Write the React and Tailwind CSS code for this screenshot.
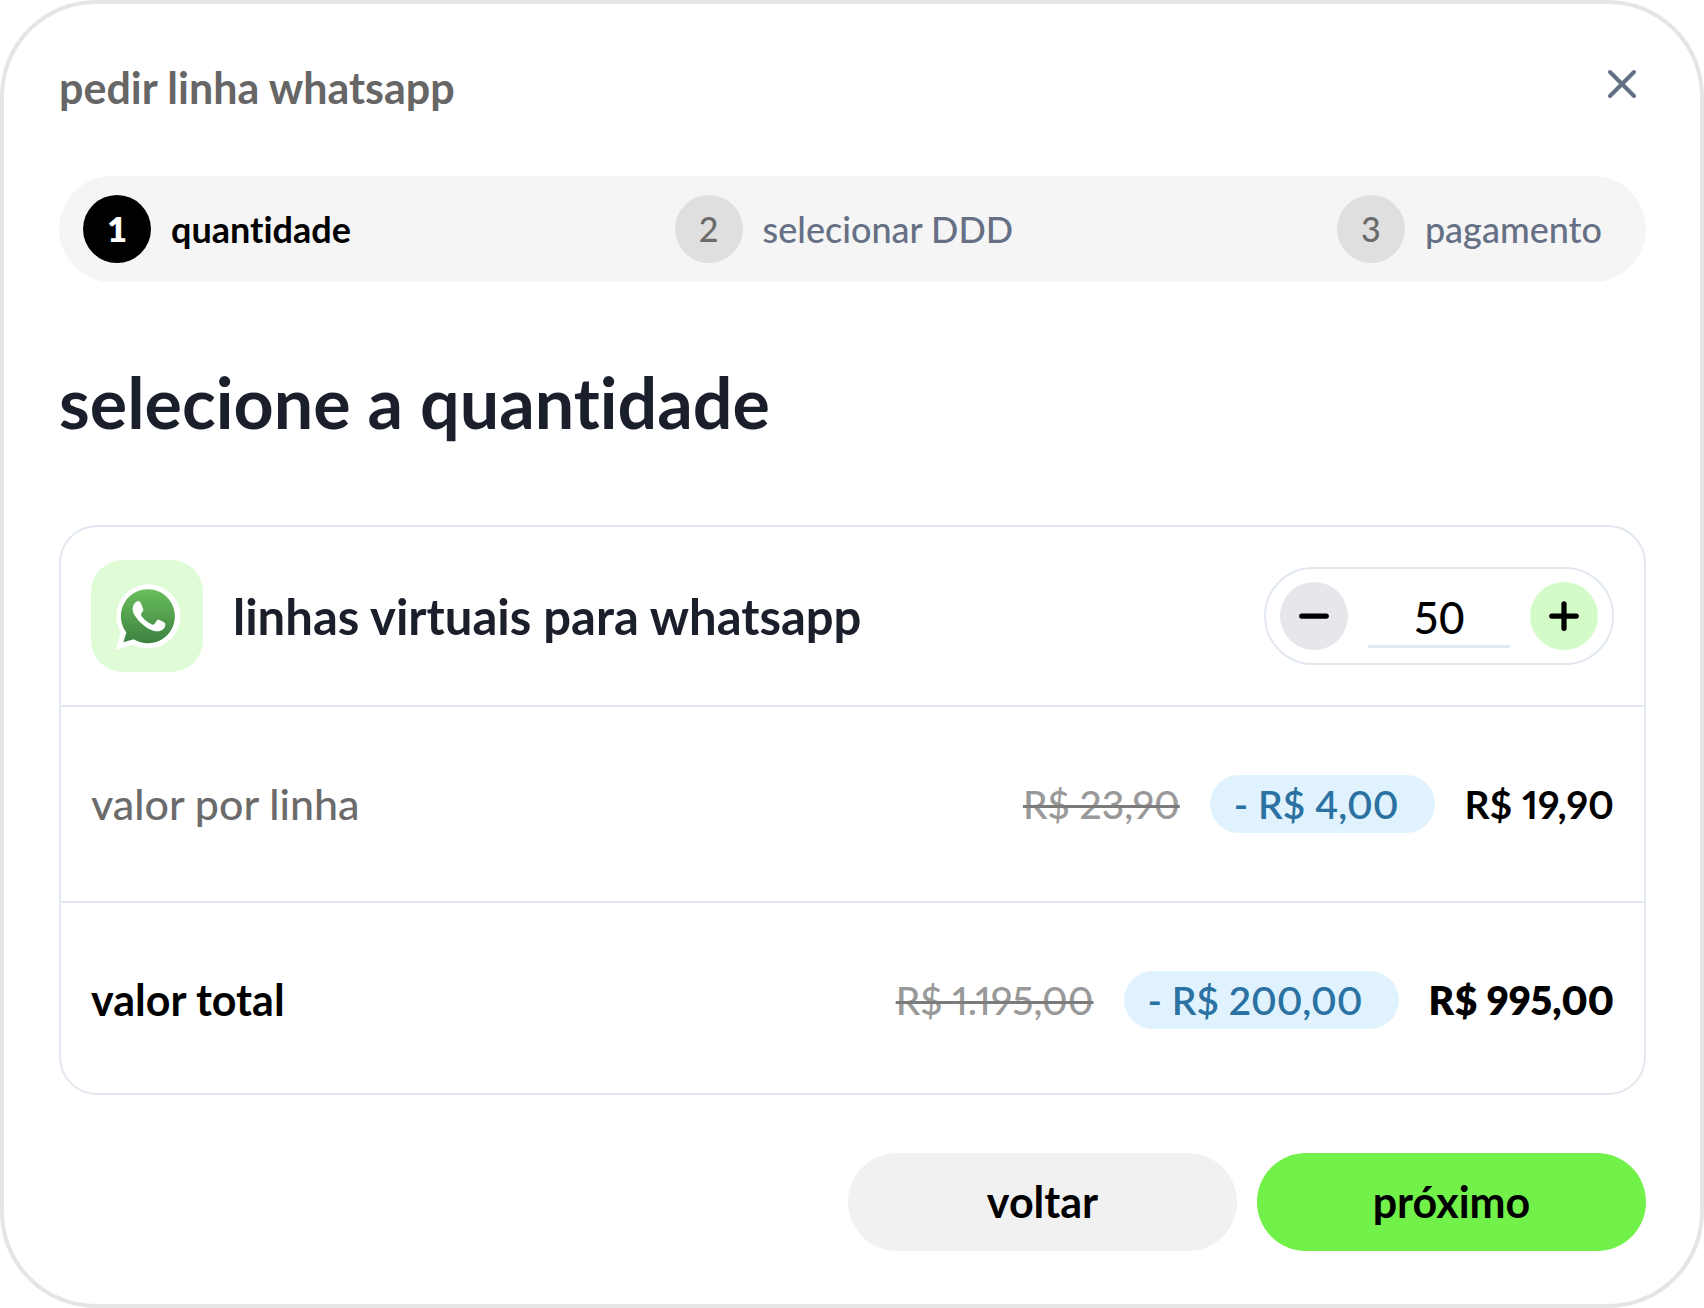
import { useState } from 'react';
import clsx from 'clsx';
import { Minus, Plus, X } from 'lucide-react';

const STEPS = [
	{ id: 1, label: 'quantidade' },
	{ id: 2, label: 'selecionar DDD' },
	{ id: 3, label: 'pagamento' },
];

const LIST_PRICE = 23.9;
const UNIT_DISCOUNT = 4;

const money = ( value ) => {
	const [ whole, cents ] = value.toFixed( 2 ).split( '.' );
	return `R$ ${ whole.replace( /\B(?=(\d{3})+$)/g, '.' ) },${ cents }`;
};

const WhatsAppIcon = () => (
	<svg viewBox="0 0 112 112" className="size-28" aria-hidden="true">
		<defs>
			<linearGradient id="bubble" x1="0" y1="0" x2="0" y2="1">
				<stop offset="0" stopColor="#6abf5b" />
				<stop offset="1" stopColor="#3c8142" />
			</linearGradient>
		</defs>
		<path
			fill="#fff"
			d="M24.7 90.2 29.6 72.2A32 32 0 1 1 42 84.4Z"
		/>
		<path
			fill="url(#bubble)"
			d="M32.4 82.2 35.4 72.6A27 27 0 1 1 42.7 79.2Z"
		/>
		<path
			fill="#fff"
			d="M44.3 42.6C45.6 41.4 47.6 40.8 48.8 41.6C49.6 42.2 51.6 47.2 52.3 49.4C52.7 50.8 50.2 53 49.9 54.4C49.9 55.8 53 59 55.4 61C58 63 61 64.9 62.4 64.7C63.7 64.4 65.4 60.6 66.8 59.8C67.9 59.4 72.6 61.8 73.9 62.9C74.8 64 74.2 67.2 72.6 68.8C70.6 70.8 67.6 71.6 64.8 71.3C60 70.7 54.6 67.4 50.8 63.8C46.6 59.8 42.7 54.8 41.8 51C41.2 48 42.2 44.4 44.3 42.6Z"
		/>
	</svg>
);

const Step = ( { step, active } ) => (
	<li
		className="flex items-center gap-5"
		aria-current={ active ? 'step' : undefined }
	>
		<span
			className={ clsx(
				'flex size-[68px] items-center justify-center rounded-full text-[34px] leading-10',
				active
					? 'bg-black font-extrabold text-white'
					: 'bg-[#dfdfdf] font-medium text-[#6b6b6b]'
			) }
		>
			{ step.id }
		</span>
		<span
			className={ clsx(
				'text-[36px] leading-10',
				active ? 'font-bold text-black' : 'font-medium text-[#667085]'
			) }
		>
			{ step.label }
		</span>
	</li>
);

const PriceRow = ( { label, original, discount, final, total } ) => (
	<div
		className={ clsx(
			'flex items-center justify-between px-[30px] pt-[68px]',
			total ? 'pb-16' : 'border-b-2 border-[#e2e8f0] pb-[68px]'
		) }
	>
		<dt
			className={ clsx(
				'text-[43px] leading-[58px]',
				total ? 'font-bold text-black' : 'font-medium text-[#6b6b6b]'
			) }
		>
			{ label }
		</dt>
		<dd className="flex items-center gap-[30px] text-[39px] leading-[58px] proportional-nums">
			<s className="font-medium text-[#999] decoration-[#7b7b7b] decoration-3">
				{ money( original ) }
			</s>
			<span className="rounded-full bg-[#e0f2fe] pr-9 pl-6 font-semibold text-[#2b72a2]">
				- { money( discount ) }
			</span>
			<span className={ total ? 'font-extrabold' : 'font-bold' }>
				{ money( final ) }
			</span>
		</dd>
	</div>
);

const App = () => {
	const [ quantity, setQuantity ] = useState( 50 );

	return (
		<div className="bg-white font-['Lato',sans-serif] text-black [font-variant-ligatures:none]">
			<main className="flex min-h-screen flex-col rounded-[96px] border-4 border-[#e5e5e5] pt-14 pr-[54px] pb-[53px] pl-[55px]">
				<header className="flex items-start justify-between">
					<h1 className="text-[43px] leading-[56px] font-bold text-[#666]">
						pedir linha whatsapp
					</h1>
					<button type="button" aria-label="fechar">
						<X
							className="size-12 text-[#667085]"
							strokeWidth={ 2 }
						/>
					</button>
				</header>

				<ol className="mt-[60px] flex items-center justify-between rounded-full bg-[#f5f5f5] py-[19px] pr-11 pl-6">
					{ STEPS.map( ( step ) => (
						<Step
							key={ step.id }
							step={ step }
							active={ step.id === 1 }
						/>
					) ) }
				</ol>

				<h2 className="mt-[84px] text-[70px] leading-[72px] font-bold text-[#1a1f2b]">
					selecione a quantidade
				</h2>

				<section className="mt-[87px] rounded-[38px] border-2 border-[#e2e8f0]">
					<div className="flex items-center justify-between border-b-2 border-[#e2e8f0] px-[30px] py-[33px]">
						<div className="flex items-center gap-[30px]">
							<span className="rounded-[32px] bg-[#dffcd6]">
								<WhatsAppIcon />
							</span>
							<label
								htmlFor="quantity"
								className="text-[49px] leading-[60px] font-bold text-[#1a1f2b]"
							>
								linhas virtuais para whatsapp
							</label>
						</div>
						<div className="flex items-center gap-5 rounded-full border-2 border-[#e2e8f0] px-[14px] py-[13px]">
							<button
								type="button"
								aria-label="diminuir"
								className="flex size-[68px] items-center justify-center rounded-full bg-[#e5e7eb]"
								onClick={ () =>
									setQuantity( Math.max( 1, quantity - 1 ) )
								}
							>
								<Minus className="size-[42px]" strokeWidth={ 3 } />
							</button>
							<input
								id="quantity"
								type="text"
								inputMode="numeric"
								value={ quantity }
								onChange={ ( e ) =>
									setQuantity( Number( e.target.value ) || 1 )
								}
								className="h-16 w-[142px] border-b-3 border-[#e2e8f0] pt-1 text-center text-[44px] leading-[56px] font-medium outline-none"
							/>
							<button
								type="button"
								aria-label="aumentar"
								className="flex size-[68px] items-center justify-center rounded-full bg-[#d3fbc7]"
								onClick={ () => setQuantity( quantity + 1 ) }
							>
								<Plus className="size-[42px]" strokeWidth={ 3 } />
							</button>
						</div>
					</div>
					<dl>
						<PriceRow
							label="valor por linha"
							original={ LIST_PRICE }
							discount={ UNIT_DISCOUNT }
							final={ LIST_PRICE - UNIT_DISCOUNT }
						/>
						<PriceRow
							label="valor total"
							original={ LIST_PRICE * quantity }
							discount={ UNIT_DISCOUNT * quantity }
							final={ ( LIST_PRICE - UNIT_DISCOUNT ) * quantity }
							total
						/>
					</dl>
				</section>

				<footer className="mt-[58px] flex justify-end gap-5 text-[43px] font-bold">
					<button
						type="button"
						className="h-[98px] w-[389px] rounded-full bg-[#f1f1f1]"
					>
						voltar
					</button>
					<button
						type="button"
						className="h-[98px] w-[389px] rounded-full bg-[#72f14a]"
					>
						próximo
					</button>
				</footer>
			</main>
		</div>
	);
};

export default App;
